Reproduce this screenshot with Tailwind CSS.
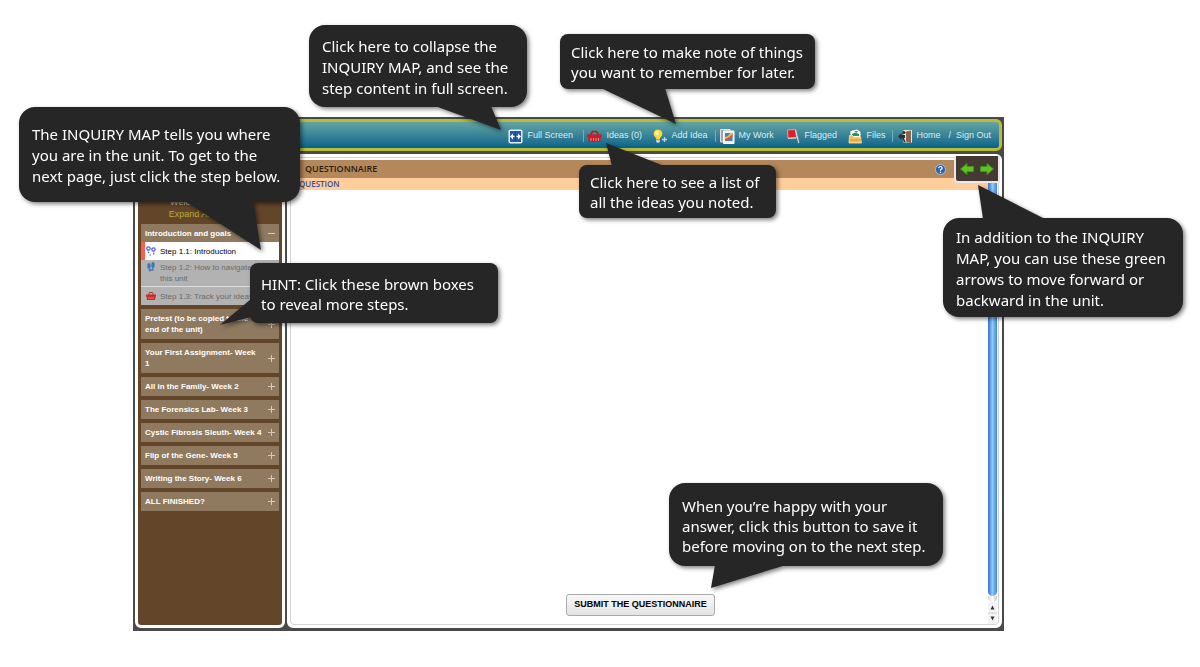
<!DOCTYPE html>
<html lang="en">
<head>
<meta charset="utf-8">
<title>Inquiry unit guide</title>
<script src="https://cdn.jsdelivr.net/npm/@tailwindcss/browser@4"></script>
</head>
<body class="relative flex min-h-screen flex-col bg-white pt-[117px] pr-[196px] pb-9 pl-[133px] font-['Liberation_Sans',Arial,sans-serif]">

<div class="flex flex-1 flex-col gap-[3px] bg-[#4a4a4a] px-0.5 pt-0.5 pb-[3px]">
  <!-- Toolbar -->
  <header class="flex h-8 items-center justify-end rounded-md border-[3px] border-[#b9bd34] bg-linear-to-b from-[#62a5a3] to-[#00648a] pt-0.5 pr-[5px] text-[9px] text-[#d8eef3]">
    <nav class="flex items-center">
      <a href="#" class="flex items-center gap-1">
        <svg class="size-[15px]" viewBox="0 0 15 15"><rect x=".5" y=".5" width="14" height="14" rx="2" fill="#e9f0f8"/><rect x="2" y="2" width="11" height="11" fill="#2159b4"/><path d="M2 7.500 5 4.500V10.500ZM13 7.500 10 4.500V10.500Z" fill="#fff"/><path d="M4 7.500H6.500M8.500 7.500H11" stroke="#fff" stroke-width="1.600"/><path d="M7.500 2V13" stroke="#17459a"/></svg>
        <span class="w-[50px]">Full Screen</span></a>
      <span class="ml-1.5 h-3 w-px bg-[#6fb0bd]"></span>
      <a href="#" class="ml-[3px] flex items-center gap-1">
        <svg class="size-[15px]" viewBox="0 0 15 15"><path d="M3.500 6 5.500 2.500H9.500L11.500 6" fill="none" stroke="#b51a20" stroke-width="1.600"/><path d="M0 5.500H15V8H14L13 13H2L1 8H0Z" fill="#d11a22"/><path d="M4 9V12M6.500 9V12M9 9V12M11.500 9V12" stroke="#f4aaa7" stroke-width=".8"/></svg>
        <span class="w-10">Ideas (0)</span></a>
      <a href="#" class="ml-[7px] flex items-center gap-[3px]">
        <svg class="size-[15px]" viewBox="0 0 15 15"><path d="M5 .5A4.300 4.300 0 0 0 2.500 8.300L3.200 10.500H6.800L7.500 8.300A4.300 4.300 0 0 0 5 .5Z" fill="#ffd93a"/><circle cx="4" cy="4" r="2" fill="#fff5a8"/><path d="M3.200 11H6.800V13L5 14 3.200 13Z" fill="#d7d7cd"/><path d="M9 10.500H14M11.500 8V13" stroke="#b8dbe3" stroke-width="1.300"/></svg>
        <span class="w-10">Add Idea</span></a>
      <span class="ml-1 h-3 w-px bg-[#6fb0bd]"></span>
      <a href="#" class="ml-1 flex items-center gap-[3px]">
        <svg class="size-[15px]" viewBox="0 0 15 15"><path d="M.5 .5H10V13H.5Z" fill="#9fa5aa" stroke="#e4e4e4"/><path d="M3.500 2H14V14.500H3.500Z" fill="#efefef" stroke="#fff"/><path d="M5 4H12.500V12H5Z" fill="#3f83c9"/><path d="M5 8 8 7 10 4H12.500V8L5 12Z" fill="#f6b13c"/><path d="M5 10 8 9 12.500 5.500V8L8 11 5 12Z" fill="#df4830"/></svg>
        <span class="w-[39px]">My Work</span></a>
      <a href="#" class="ml-[9px] flex items-center gap-[3px]">
        <svg class="size-[15px]" viewBox="0 0 15 15"><path d="M1.500 1 9.500 .5 10.500 8.500 2 9Z" fill="#d8202f" stroke="#f2b5b5" stroke-width=".8"/><path d="M9.500 1 12.800 14M2 9.500 10.500 9" stroke="#d9d9d9" stroke-width="1.200"/></svg>
        <span class="w-9">Flagged</span></a>
      <a href="#" class="ml-2 flex items-center gap-[3px]">
        <svg class="size-[15px]" viewBox="0 0 15 15"><path d="M2.500 2 9 .5 12.500 3V8H2.500Z" fill="#fff"/><path d="M4 5 7 3.500 11 5V7H4Z" fill="#2a9453"/><path d="M6 2H10L9 4Z" fill="#3e86c8"/><path d="M1.500 6.500 4 6 6 8H12.500L13.500 14H1Z" fill="#f4bf59" stroke="#ffe6ad" stroke-width=".8"/><path d="M2 11H13" stroke="#d89838"/></svg>
        <span class="w-[22px]">Files</span></a>
      <span class="ml-1 h-3 w-px bg-[#6fb0bd]"></span>
      <a href="#" class="ml-[5px] flex items-center gap-[3px]">
        <svg class="size-[15px]" viewBox="0 0 15 15"><path d="M5.500 1H14V13.500H5.500Z" fill="#efe6de"/><path d="M8 2.500 13 1.500V14L8 12.500Z" fill="#8d6248"/><path d="M0 7.500 3.500 4V6H7V9H3.500V11Z" fill="#2c2f36"/><circle cx="6" cy="3.500" r="1.500" fill="#2c2f36"/><path d="M5 9 7 13" stroke="#2c2f36" stroke-width="1.500"/></svg>
        <span class="w-[27px]">Home</span></a>
      <span class="mx-[5px]">/</span>
      <a href="#" class="w-[38px]">Sign Out</a>
    </nav>
  </header>

  <div class="flex flex-1 gap-0.5">
    <!-- Inquiry map -->
    <aside class="flex w-[150px] shrink-0 flex-col gap-1 rounded-md border-[3px] border-white bg-[#63452a] px-[3px] pt-[39px] text-[8px] leading-[11px] font-bold text-white">
      <div class="pr-10 text-center text-[9px] leading-3 font-normal">
        <p class="text-[#c9bfae]">Welcome!</p>
        <a href="#" class="block text-[#b9a93a]">Expand All</a>
      </div>
      <section>
        <button class="flex h-[18px] w-full items-center justify-between bg-[#8f7a60] px-1 text-left">Introduction and goals
          <svg class="size-[7px]" viewBox="0 0 7 7"><path d="M0 3.500H7" stroke="#d5cabb"/></svg></button>
        <ul class="font-normal text-[#6b6b6b]">
          <li><a href="#" class="flex h-[18px] items-center gap-1 border-l-4 border-[#f8604c] bg-white pl-px text-black">
            <svg class="size-2.5 shrink-0" viewBox="0 0 10 10" fill="none" stroke="#4f65d8" stroke-width="1.200"><circle cx="2.500" cy="2.500" r="1.700"/><circle cx="7.500" cy="3.500" r="1.700"/><path d="M2 5.500 3 7M8 6.500 7.500 8.500M3.500 9H5" /></svg>Step 1.1: Introduction</a></li>
          <li><a href="#" class="flex items-start gap-1 border-b border-[#dedede] bg-[#b2b2b2] py-0.5 pr-4 pl-[5px]">
            <svg class="size-2.5 shrink-0" viewBox="0 0 10 10" fill="#3b79b5"><ellipse cx="3" cy="4" rx="1.700" ry="3"/><ellipse cx="7" cy="3" rx="1.700" ry="3"/><circle cx="4" cy="8.300" r="1.200"/><circle cx="6.500" cy="7.500" r="1.200"/></svg><span>Step 1.2: How to navigate this unit</span></a></li>
          <li><a href="#" class="flex h-[18px] items-center gap-1 bg-[#b2b2b2] pl-[5px]">
            <svg class="size-2.5 shrink-0" viewBox="0 0 10 10"><path d="M2.500 4 3.500 1.500H6.500L7.500 4" fill="none" stroke="#bd2f2f"/><path d="M0 3.500H10V5.500H9.500L9 9H1L.5 5.500H0Z" fill="#cc2929"/><path d="M3 6V8M5 6V8M7 6V8" stroke="#eda6a6" stroke-width=".7"/></svg>Step 1.3: Track your ideas</a></li>
        </ul>
      </section>
      <button class="flex h-[30px] items-center justify-between bg-[#8f7a60] px-1 text-left"><span class="max-w-28">Pretest (to be copied to the end of the unit)</span><svg class="size-[7px] shrink-0" viewBox="0 0 7 7"><path d="M0 3.500H7M3.500 0V7" stroke="#d5cabb"/></svg></button>
      <button class="flex h-[30px] items-center justify-between bg-[#8f7a60] px-1 text-left"><span class="max-w-[115px]">Your First Assignment- Week 1</span><svg class="size-[7px] shrink-0" viewBox="0 0 7 7"><path d="M0 3.500H7M3.500 0V7" stroke="#d5cabb"/></svg></button>
      <button class="flex h-[19px] items-center justify-between bg-[#8f7a60] px-1 text-left"><span>All in the Family- Week 2</span><svg class="size-[7px] shrink-0" viewBox="0 0 7 7"><path d="M0 3.500H7M3.500 0V7" stroke="#d5cabb"/></svg></button>
      <button class="flex h-[19px] items-center justify-between bg-[#8f7a60] px-1 text-left"><span>The Forensics Lab- Week 3</span><svg class="size-[7px] shrink-0" viewBox="0 0 7 7"><path d="M0 3.500H7M3.500 0V7" stroke="#d5cabb"/></svg></button>
      <button class="flex h-[19px] items-center justify-between bg-[#8f7a60] px-1 text-left"><span class="whitespace-nowrap">Cystic Fibrosis Sleuth- Week 4</span><svg class="size-[7px] shrink-0" viewBox="0 0 7 7"><path d="M0 3.500H7M3.500 0V7" stroke="#d5cabb"/></svg></button>
      <button class="flex h-[19px] items-center justify-between bg-[#8f7a60] px-1 text-left"><span>Flip of the Gene- Week 5</span><svg class="size-[7px] shrink-0" viewBox="0 0 7 7"><path d="M0 3.500H7M3.500 0V7" stroke="#d5cabb"/></svg></button>
      <button class="flex h-[19px] items-center justify-between bg-[#8f7a60] px-1 text-left"><span>Writing the Story- Week 6</span><svg class="size-[7px] shrink-0" viewBox="0 0 7 7"><path d="M0 3.500H7M3.500 0V7" stroke="#d5cabb"/></svg></button>
      <button class="flex h-[19px] items-center justify-between bg-[#8f7a60] px-1 text-left"><span>ALL FINISHED?</span><svg class="size-[7px] shrink-0" viewBox="0 0 7 7"><path d="M0 3.500H7M3.500 0V7" stroke="#d5cabb"/></svg></button>
    </aside>

    <!-- Step content -->
    <main class="relative flex flex-1 rounded-md border-[3px] border-white bg-white">
      <div class="flex flex-1 rounded-sm border border-[#d4d4d4] pt-0.5 pr-px pl-0.5">
        <div class="flex flex-1 flex-col">
          <div class="flex h-[18px] items-center justify-between bg-[#b5885b] pr-[42px] pl-3 font-['Open_Sans','Noto_Sans',sans-serif] text-[9px] font-semibold text-[#2b1c10]">
            <h1>QUESTIONNAIRE</h1>
            <svg class="size-[11px]" viewBox="0 0 11 11"><circle cx="5.500" cy="5.500" r="5" fill="#2f64a5" stroke="#a9bfd8"/><path d="M3.700 4.200Q4 2.500 5.500 2.500T7.200 4.100Q7.200 5 5.500 5.700V6.700M5.500 7.700V9" fill="none" stroke="#fff" stroke-width="1.200"/></svg>
          </div>
          <h2 class="h-3 bg-[#ffce9c] pl-1.5 font-['Open_Sans','Noto_Sans',sans-serif] text-[8px] leading-3 font-semibold text-[#3b4f94]">QUESTION</h2>
          <div class="flex flex-1 items-end justify-center pb-2">
            <button class="h-[22px] rounded-[3px] border border-[#aaa] bg-linear-to-b from-[#f8f8f8] to-[#e4e4e4] px-[7px] text-[9px] font-bold text-black">SUBMIT THE QUESTIONNAIRE</button>
          </div>
        </div>
        <div class="flex w-[9px] flex-col" aria-hidden="true">
          <div class="flex-1 rounded-full bg-linear-to-r from-[#3a6fc4] via-[#8ecbff] to-[#3f85e0]"></div>
          <div class="h-1.5 rounded-b-full bg-linear-to-r from-[#d8d8d8] via-white to-[#c4c4c4]"></div>
          <svg class="h-[22px] w-[9px]" viewBox="0 0 9 22"><path d="M0 0H9V22H0Z" fill="#f4f4f4"/><path d="M0 11H9" stroke="#ccc"/><path d="M2.500 7.500H6.500L4.500 3.500ZM2.500 14.500H6.500L4.500 18.500Z" fill="#333"/></svg>
        </div>
      </div>
      <nav class="absolute -top-px -right-px flex h-[27px] w-[46px] items-center justify-center gap-1.5 rounded-bl-sm border-2 border-t-0 border-[#e8e8e8] bg-[#443a33]">
        <button aria-label="Previous step"><svg class="h-3 w-[14px]" viewBox="0 0 14 12"><path d="M.5 6 7 .5V3.500H13.500V8.500H7V11.500Z" fill="#5cc123" stroke="#3c9517"/></svg></button>
        <button aria-label="Next step"><svg class="h-3 w-[14px]" viewBox="0 0 14 12"><path d="M13.500 6 7 .5V3.500H.5V8.500H7V11.500Z" fill="#5cc123" stroke="#3c9517"/></svg></button>
      </nav>
    </main>
  </div>
</div>

<!-- Callouts floating over the page -->
<div class="font-['Noto_Sans','Open_Sans',sans-serif] text-[15px] leading-5 whitespace-nowrap text-white">
  <div class="absolute top-[107px] left-[19px] flex h-[95px] w-[281px] items-center rounded-2xl bg-[#262626] px-[13px] pt-0.5 leading-[21px] drop-shadow-[2px_2px_2px_rgba(0,0,0,0.5)]">
    <svg class="absolute top-0 left-0 size-px overflow-visible" fill="#262626"><path d="M166 94H234L242 143Z"/></svg>
    <p class="relative">The INQUIRY MAP tells you where<br>you are in the unit. To get to the<br>next page, just click the step below.</p>
  </div>
  <div class="absolute top-[25px] left-[309px] flex h-[82px] w-[218px] items-center rounded-2xl bg-[#262626] px-[13px] pt-0.5 leading-[21px] drop-shadow-[2px_2px_2px_rgba(0,0,0,0.5)]">
    <svg class="absolute top-0 left-0 size-px overflow-visible" fill="#262626"><path d="M126 81H182L192 105Z"/></svg>
    <p class="relative">Click here to collapse the<br>INQUIRY MAP, and see the<br>step content in full screen.</p>
  </div>
  <div class="absolute top-[34px] left-[560px] flex h-[55px] w-[255px] items-center rounded-lg bg-[#262626] px-[11px] drop-shadow-[2px_2px_2px_rgba(0,0,0,0.5)]">
    <svg class="absolute top-0 left-0 size-px overflow-visible" fill="#262626"><path d="M41 54H105L116 90Z"/></svg>
    <p class="relative">Click here to make note of things<br>you want to remember for later.</p>
  </div>
  <div class="absolute top-[165px] left-[579px] flex h-[53px] w-[197px] items-center rounded-lg bg-[#262626] px-[11px] drop-shadow-[2px_2px_2px_rgba(0,0,0,0.5)]">
    <svg class="absolute top-0 left-0 size-px overflow-visible" fill="#262626"><path d="M33 1H85L27 -22Z"/></svg>
    <p class="relative">Click here to see a list of<br>all the ideas you noted.</p>
  </div>
  <div class="absolute top-[218px] left-[943px] flex h-[99px] w-[240px] items-center rounded-2xl bg-[#262626] px-[13px] pt-0.5 leading-[21px] drop-shadow-[2px_2px_2px_rgba(0,0,0,0.5)]">
    <svg class="absolute top-0 left-0 size-px overflow-visible" fill="#262626"><path d="M40 1H102L35 -33Z"/></svg>
    <p class="relative">In addition to the INQUIRY<br>MAP, you can use these green<br>arrows to move forward or<br>backward in the unit.</p>
  </div>
  <div class="absolute top-[263px] left-[250px] flex h-[60px] w-[248px] items-center rounded-lg bg-[#262626] px-[11px] pt-0.5 drop-shadow-[2px_2px_2px_rgba(0,0,0,0.5)]">
    <svg class="absolute top-0 left-0 size-px overflow-visible" fill="#262626"><path d="M1 36V54L-30 62Z"/></svg>
    <p class="relative">HINT: Click these brown boxes<br>to reveal more steps.</p>
  </div>
  <div class="absolute top-[483px] left-[669px] flex h-[83px] w-[274px] items-center rounded-2xl bg-[#262626] px-[13px] pt-0.5 drop-shadow-[2px_2px_2px_rgba(0,0,0,0.5)]">
    <svg class="absolute top-0 left-0 size-px overflow-visible" fill="#262626"><path d="M46 82H117L42 105Z"/></svg>
    <p class="relative">When you’re happy with your<br>answer, click this button to save it<br>before moving on to the next step.</p>
  </div>
</div>
</body>
</html>
